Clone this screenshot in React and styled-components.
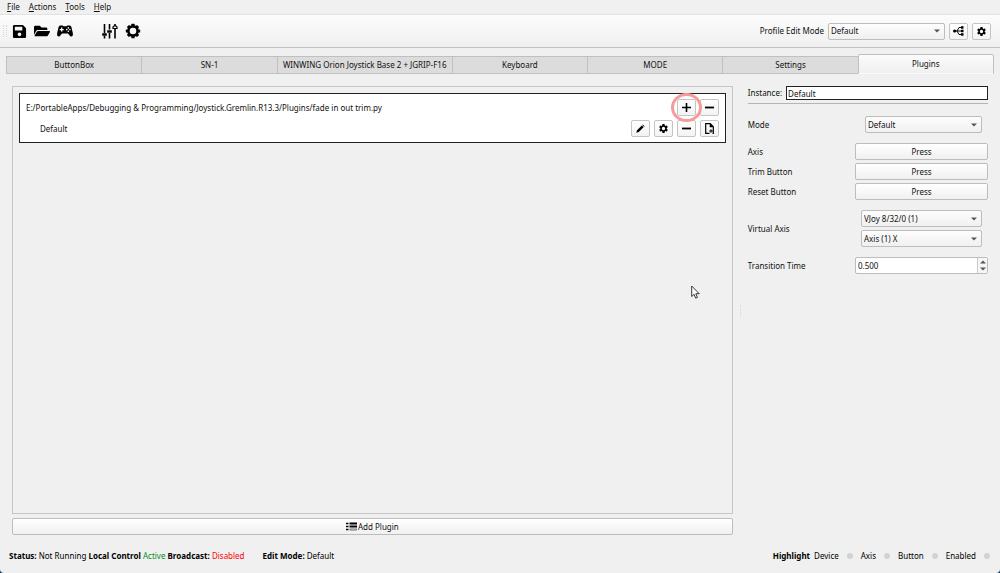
import { useState } from 'react'
import styled, { createGlobalStyle } from 'styled-components'
import { FaSave, FaFolderOpen } from 'react-icons/fa'
import { MdSettings } from 'react-icons/md'

const GlobalStyle = createGlobalStyle`
    * {
        box-sizing: border-box;
    }
    body {
        margin: 0;
        background: #0b3350;
        color: #111;
        font-family: "Noto Sans", "Open Sans", sans-serif;
        font-size: 8px;
        line-height: 12px;
    }
    button, input, select {
        font: inherit;
        color: inherit;
    }
`

const Window = styled.div`
    position: relative;
    display: flex;
    flex-direction: column;
    min-height: 100vh;
    background: #f0f0f0;
    border-radius: 0 0 4px 4px;
`

const MenuBar = styled.nav`
    display: flex;
    gap: 9px;
    padding: 1px 7px;
    border-bottom: 1px solid #e2e2e2;
`

const MenuItem = styled.button`
    border: none;
    padding: 0;
    background: transparent;

    &::first-letter {
        text-decoration: underline;
    }
`

const Toolbar = styled.header`
    display: flex;
    align-items: center;
    height: 33px;
    padding: 0 9px 0 3px;
    background: linear-gradient(#fcfcfc, #f0f0f0);
    border-bottom: 1px solid #c2c2c2;
`

const Grip = styled.span`
    width: 4px;
    height: 12px;
    border: 1px dotted #dadada;
    border-width: 0 1px;
`

const ToolGroup = styled.div`
    display: flex;
    align-items: center;
    gap: 7px;
    margin-left: ${props => props.$start}px;
`

const ToolButton = styled.button`
    display: flex;
    border: none;
    padding: 0;
    background: transparent;
    color: #000;
`

const ModePicker = styled.div`
    display: flex;
    align-items: center;
    gap: 4px;
    margin-left: auto;
`

const SelectBox = styled.span`
    display: grid;
    align-items: center;
    width: ${props => props.$width || 'auto'};

    & > * {
        grid-area: 1 / 1;
    }
    svg {
        justify-self: end;
        margin-right: 5px;
        pointer-events: none;
    }
`

const Select = styled.select`
    appearance: none;
    width: 100%;
    height: 17px;
    padding: 0 2px;
    border: 1px solid #bdbdbd;
    border-radius: 2px;
    background: linear-gradient(#fdfdfd, #f0f0f0);
`

const SmallButton = styled.button`
    display: flex;
    align-items: center;
    justify-content: center;
    width: 19px;
    height: 17px;
    padding: 0;
    border: 1px solid #c4c4c4;
    border-radius: 2px;
    background: linear-gradient(#fff, #f3f3f3);
    color: #000;
`

const Tabs = styled.div`
    display: flex;
    align-items: flex-end;
    height: 26px;
    padding: 0 6px;
`

const Tab = styled.button`
    flex: ${props => props.$grow || 135} 1 0;
    height: ${props => (props.$active ? 20 : 18)}px;
    padding: 0;
    white-space: nowrap;
    border: 1px solid #c0c0c0;
    border-left-width: ${props => (props.$first || props.$active ? 1 : 0)}px;
    border-right-width: ${props => (props.$beforeActive ? 0 : 1)}px;
    border-bottom-color: ${props => (props.$active ? 'transparent' : '#c0c0c0')};
    border-radius: ${props => (props.$active ? '2px 2px 0 0' : '0')};
    background: ${props => (props.$active ? 'linear-gradient(#fbfbfb, #f0f0f0)' : '#dcdcdc')};
`

const Main = styled.main`
    flex: 1;
    display: flex;
    padding: 12px 12px 0;
`

const PluginColumn = styled.section`
    flex: 3 1 0;
    display: flex;
    flex-direction: column;
    gap: 4px;
`

const PluginList = styled.div`
    flex: 1;
    padding: 6px;
    border: 1px solid #c6c6c6;
`

const PluginCard = styled.article`
    display: flex;
    flex-direction: column;
    gap: 4px;
    padding: 5px 6px;
    border: 1px solid #222;
    background: #fff;
`

const PluginRow = styled.div`
    display: flex;
    align-items: center;
    gap: 4px;
    padding-left: ${props => (props.$nested ? 14 : 0)}px;
`

const PluginName = styled.span`
    flex: 1;
`

const Marked = styled.span`
    position: relative;
    display: flex;
`

const Ring = styled.span`
    position: absolute;
    inset: -6px;
    border: 3px solid #f79a9a;
    border-radius: 50%;
    pointer-events: none;
`

const WideButton = styled.button`
    display: flex;
    align-items: center;
    justify-content: center;
    gap: 1px;
    height: 17px;
    padding: 0;
    border: 1px solid #bdbdbd;
    border-radius: 2px;
    background: linear-gradient(#fff, #f0f0f0);
`

const Splitter = styled.div`
    display: flex;
    align-items: center;
    justify-content: center;
    width: 15px;

    &::before {
        content: '';
        height: 12px;
        border-left: 1px dotted #d8d8d8;
    }
`

const Settings = styled.aside`
    flex: 1 1 0;
    display: flex;
    flex-direction: column;
    gap: 10px;
`

const InstanceRow = styled.div`
    display: flex;
    align-items: center;
    gap: 4px;
    padding-bottom: 3px;
    margin-bottom: 2px;
    border-bottom: 1px solid #b4b4b4;
`

const InstanceInput = styled.input`
    flex: 1;
    min-width: 0;
    height: 14px;
    padding: 0 1px;
    border: 1px solid #222;
    background: #fff;
`

const FieldGroup = styled.div`
    display: flex;
    flex-direction: column;
    gap: 3px;
`

const Field = styled.div`
    display: flex;
    align-items: center;
    justify-content: space-between;
`

const Controls = styled.div`
    display: flex;
    flex-direction: column;
    gap: 3px;
    width: 133px;
    padding: 0 6px 0 ${props => props.$indent || 0}px;
`

const PressButton = styled(WideButton)`
    width: 133px;
`

const SpinBox = styled.div`
    display: flex;
    width: 133px;
    height: 17px;
    border: 1px solid #bdbdbd;
    border-radius: 2px;
    background: #fff;
`

const SpinInput = styled.input`
    flex: 1;
    min-width: 0;
    padding: 0 2px;
    border: none;
    background: transparent;
    appearance: textfield;

    &::-webkit-inner-spin-button {
        appearance: none;
    }
`

const SpinArrows = styled.div`
    display: flex;
    flex-direction: column;
    width: 10px;
    border-left: 1px solid #c9c9c9;
    background: #f6f6f6;
`

const SpinArrow = styled.button`
    flex: 1;
    display: flex;
    align-items: center;
    justify-content: center;
    min-height: 0;
    padding: 0;
    border: none;
    background: transparent;
`

const StatusBar = styled.footer`
    display: flex;
    align-items: center;
    height: 38px;
    padding: 4px 10px 0 9px;
    color: #000;
`

const EditMode = styled.span`
    margin-left: 18px;
`

const StateText = styled.span`
    color: ${props => props.$color};
`

const Highlights = styled.div`
    display: flex;
    align-items: center;
    gap: 8px;
    margin-left: auto;
`

const HighlightTitle = styled.b`
    margin-right: -4px;
`

const Dot = styled.span`
    width: 6px;
    height: 6px;
    border-radius: 50%;
    background: #d2d2d2;
`

const Pointer = styled.svg`
    position: absolute;
    left: 691px;
    top: 285px;
    pointer-events: none;
`

function Arrow({ up }) {
    return (
        <svg width="6" height="4" viewBox="0 0 6 4" aria-hidden="true">
            <path d={up ? 'M0 3.5h6L3 .5z' : 'M0 .5h6l-3 3z'} fill="#555" />
        </svg>
    )
}

function DropDown({ id, label, options, width }) {
    return (
        <SelectBox $width={width}>
            <Select id={id} aria-label={label}>
                {options.map(option => <option key={option}>{option}</option>)}
            </Select>
            <Arrow />
        </SelectBox>
    )
}

function GamepadIcon() {
    return (
        <svg width="16" height="12" viewBox="0 0 16 12" aria-hidden="true">
            <path d="M3.6.4h2l.9.9h3l.9-.9h2c1 0 1.7.6 2 1.7l1.4 6c.4 1.900-.3 3.300-1.500 3.300-.9 0-1.500-.6-2.100-1.500L11 8.400H5l-1.200 1.500c-.6.9-1.200 1.500-2.100 1.500C.5 11.400-.2 10 .2 8.100l1.400-6C1.900 1 2.600.4 3.600.4z" />
            <path d="M4.700 2.600v4M2.700 4.600h4" stroke="#f7f7f7" strokeWidth="1.300" />
            <g fill="#f7f7f7">
                <circle cx="11.300" cy="2.900" r=".8" />
                <circle cx="9.700" cy="4.600" r=".8" />
                <circle cx="12.900" cy="4.600" r=".8" />
                <circle cx="11.300" cy="6.300" r=".8" />
            </g>
        </svg>
    )
}

function SlidersIcon() {
    return (
        <svg width="16" height="16" viewBox="0 0 16 16" fill="none" stroke="#000" aria-hidden="true">
            <path d="M2.5 1v9M2.5 13v2.500M7.500 1v5.500M7.500 10v5.500M13 6v9.500M13 1v1" strokeWidth="1.600" />
            <path d="M.2 11.500h4.600M5.200 8.500h4.600" strokeWidth="2.400" />
            <path d="M11 5.500V4l2-1.800L15 4v1.500z" strokeWidth="1.200" />
        </svg>
    )
}

function GearIcon() {
    const teeth = [0, 45, 90, 135, 180, 225, 270, 315]
    return (
        <svg width="16" height="16" viewBox="0 0 16 16" aria-hidden="true">
            <circle cx="8" cy="8" r="4.600" fill="none" stroke="#000" strokeWidth="2.600" />
            {teeth.map(angle => (
                <rect key={angle} x="6.400" y=".8" width="3.200" height="2.600" rx=".5" transform={`rotate(${angle} 8 8)`} />
            ))}
        </svg>
    )
}

function BranchIcon() {
    return (
        <svg width="11" height="10" viewBox="0 0 11 10" aria-hidden="true">
            <path d="M1 5h8M4 5l2-3.500h3M4 5l2 3.500h3" fill="none" stroke="#000" strokeWidth="1" />
            <circle cx="1.600" cy="5" r="1.600" />
            <rect x="8" y=".2" width="2.500" height="2.500" />
            <rect x="8" y="3.700" width="2.500" height="2.500" />
            <rect x="8" y="7.200" width="2.500" height="2.500" />
        </svg>
    )
}

function PlusIcon() {
    return (
        <svg width="9" height="9" viewBox="0 0 9 9" aria-hidden="true">
            <path d="M0 4.500h9M4.500 0v9" stroke="#000" strokeWidth="1.600" />
        </svg>
    )
}

function MinusIcon() {
    return (
        <svg width="9" height="9" viewBox="0 0 9 9" aria-hidden="true">
            <path d="M0 4.500h9" stroke="#000" strokeWidth="1.800" />
        </svg>
    )
}

function PencilIcon() {
    return (
        <svg width="9" height="9" viewBox="0 0 9 9" aria-hidden="true">
            <path d="M.3 8.700l.7-2.500L5.800 1.400l1.800 1.800L2.800 8zM6.300.9l.6-.5 1.800 1.800-.6.500z" />
        </svg>
    )
}

function FileIcon() {
    return (
        <svg width="9" height="11" viewBox="0 0 9 11" fill="none" stroke="#000" aria-hidden="true">
            <path d="M4.500 10.300H.7V.7h4.600l3 3v6.600H7.500M5.300.7v3h3" strokeWidth="1.200" />
            <path d="M6 6.200v3.600M4.200 8h3.600" strokeWidth="1" />
        </svg>
    )
}

function ListIcon() {
    return (
        <svg width="11" height="9" viewBox="0 0 11 9" aria-hidden="true">
            <path d="M3.500.5H11v2H3.500zM3.500 3.500H11v2H3.500zM0 .8h2.500v1.400H0zM0 3.800h2.500v1.400H0zM0 6.800h2.500v1.400H0z" />
            <path d="M3.900 6.900h6.700v1.200H3.900z" fill="none" stroke="#555" strokeWidth=".7" />
        </svg>
    )
}

const menus = ['File', 'Actions', 'Tools', 'Help']

const tabs = [
    'ButtonBox',
    'SN-1',
    'WINWING Orion Joystick Base 2 + JGRIP-F16',
    'Keyboard',
    'MODE',
    'Settings',
    'Plugins',
]

const inputs = ['Axis', 'Trim Button', 'Reset Button']

const highlights = ['Device', 'Axis', 'Button', 'Enabled']

function App() {
    const [activeTab, setActiveTab] = useState('Plugins')
    const [time, setTime] = useState('0.500')

    function stepTime(amount) {
        setTime((Number(time) + amount).toFixed(3))
    }

    return (
        <Window>
            <GlobalStyle />
            <MenuBar>
                {menus.map(menu => <MenuItem key={menu}>{menu}</MenuItem>)}
            </MenuBar>
            <Toolbar>
                <Grip />
                <ToolGroup $start={5}>
                    <ToolButton aria-label="Save"><FaSave size={15} /></ToolButton>
                    <ToolButton aria-label="Open"><FaFolderOpen size={16} /></ToolButton>
                    <ToolButton aria-label="Devices"><GamepadIcon /></ToolButton>
                </ToolGroup>
                <ToolGroup $start={29}>
                    <ToolButton aria-label="Calibration"><SlidersIcon /></ToolButton>
                    <ToolButton aria-label="Options"><GearIcon /></ToolButton>
                </ToolGroup>
                <ModePicker>
                    <label htmlFor="edit-mode">Profile Edit Mode</label>
                    <DropDown id="edit-mode" options={['Default']} width="117px" />
                    <SmallButton aria-label="Mode tree"><BranchIcon /></SmallButton>
                    <SmallButton aria-label="Mode options"><MdSettings size={11} /></SmallButton>
                </ModePicker>
            </Toolbar>
            <Tabs role="tablist">
                {tabs.map((tab, index) => (
                    <Tab
                        key={tab}
                        role="tab"
                        aria-selected={tab === activeTab}
                        $active={tab === activeTab}
                        $first={index === 0}
                        $beforeActive={tabs[index + 1] === activeTab}
                        $grow={tab.length > 20 ? 175 : 135}
                        onClick={() => setActiveTab(tab)}
                    >
                        {tab}
                    </Tab>
                ))}
            </Tabs>
            <Main>
                <PluginColumn>
                    <PluginList>
                        <PluginCard>
                            <PluginRow>
                                <PluginName>
                                    E:/PortableApps/Debugging &amp; Programming/Joystick.Gremlin.R13.3/Plugins/fade in out trim.py
                                </PluginName>
                                <Marked>
                                    <SmallButton aria-label="Add instance"><PlusIcon /></SmallButton>
                                    <Ring />
                                </Marked>
                                <SmallButton aria-label="Remove plugin"><MinusIcon /></SmallButton>
                            </PluginRow>
                            <PluginRow $nested>
                                <PluginName>Default</PluginName>
                                <SmallButton aria-label="Rename"><PencilIcon /></SmallButton>
                                <SmallButton aria-label="Configure"><MdSettings size={11} /></SmallButton>
                                <SmallButton aria-label="Remove instance"><MinusIcon /></SmallButton>
                                <SmallButton aria-label="Duplicate"><FileIcon /></SmallButton>
                            </PluginRow>
                        </PluginCard>
                    </PluginList>
                    <WideButton><ListIcon /> Add Plugin</WideButton>
                </PluginColumn>
                <Splitter />
                <Settings>
                    <InstanceRow>
                        <label htmlFor="instance">Instance:</label>
                        <InstanceInput id="instance" defaultValue="Default" />
                    </InstanceRow>
                    <Field>
                        <label htmlFor="mode">Mode</label>
                        <Controls $indent={10}>
                            <DropDown id="mode" options={['Default']} />
                        </Controls>
                    </Field>
                    <FieldGroup>
                        {inputs.map(name => (
                            <Field key={name}>
                                <label htmlFor={name}>{name}</label>
                                <PressButton id={name}>Press</PressButton>
                            </Field>
                        ))}
                    </FieldGroup>
                    <Field>
                        <label htmlFor="vjoy">Virtual Axis</label>
                        <Controls $indent={6}>
                            <DropDown id="vjoy" options={['VJoy 8/32/0 (1)']} />
                            <DropDown label="Axis" options={['Axis (1) X']} />
                        </Controls>
                    </Field>
                    <Field>
                        <label htmlFor="time">Transition Time</label>
                        <SpinBox>
                            <SpinInput
                                id="time"
                                type="number"
                                step="0.001"
                                value={time}
                                onChange={event => setTime(event.target.value)}
                            />
                            <SpinArrows>
                                <SpinArrow aria-label="Increase" onClick={() => stepTime(0.1)}><Arrow up /></SpinArrow>
                                <SpinArrow aria-label="Decrease" onClick={() => stepTime(-0.1)}><Arrow /></SpinArrow>
                            </SpinArrows>
                        </SpinBox>
                    </Field>
                </Settings>
            </Main>
            <StatusBar>
                <span>
                    <b>Status:</b> Not Running <b>Local Control</b> <StateText $color="#0a8a1c">Active</StateText>{' '}
                    <b>Broadcast:</b> <StateText $color="#ff0000">Disabled</StateText>
                </span>
                <EditMode><b>Edit Mode:</b> Default</EditMode>
                <Highlights>
                    <HighlightTitle>Highlight</HighlightTitle>
                    {highlights.map(name => [<span key={name}>{name}</span>, <Dot key={name + '-dot'} />])}
                </Highlights>
            </StatusBar>
            <Pointer width="9" height="14" viewBox="0 0 9 14" aria-hidden="true">
                <path d="M.7 1v10.500l2.400-2.200 1.600 3.900 1.700-.7-1.600-3.800h3.400z" fill="#fff" stroke="#222" strokeWidth=".9" />
            </Pointer>
        </Window>
    )
}

export default App
